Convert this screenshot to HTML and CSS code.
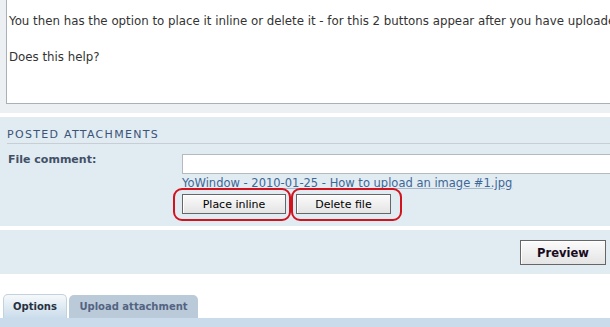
FILE: index.html
```html
<!DOCTYPE html>
<html lang="en">
<head>
  <meta charset="UTF-8">
  <title>Post a reply</title>
  <link rel="stylesheet" href="styles.css">
</head>
<body>
  <div class="panel message-panel">
    <div class="message-box">
      <p>You then has the option to place it inline or delete it - for this 2 buttons appear after you have uploaded</p>
      <p>Does this help?</p>
    </div>
  </div>

  <div class="panel attach-panel">
    <h3>Posted attachments</h3>
    <div class="attach-row">
      <label class="attach-label" for="comment">File comment:</label>
      <div class="attach-fields">
        <input type="text" id="comment" class="inputbox">
        <a href="#" class="attach-link">YoWindow - 2010-01-25 - How to upload an image #1.jpg</a>
        <div class="attach-buttons">
          <span class="ring ring-left"><button class="button2 btn-inline">Place inline</button></span>
          <span class="ring ring-right"><button class="button2 btn-delete">Delete file</button></span>
        </div>
      </div>
    </div>
  </div>

  <div class="panel submit-panel">
    <button class="button2 btn-preview">Preview</button>
  </div>

  <ul class="tabs">
    <li class="tab active">Options</li>
    <li class="tab">Upload attachment</li>
  </ul>
  <div class="tab-bar"></div>
</body>
</html>
```

FILE: styles.css
```css
html, body { margin: 0; padding: 0; background: #fff; overflow: hidden; }
body { font-family: "DejaVu Sans", Verdana, sans-serif; font-size: 11px; color: #333; width: 610px; }

.panel { overflow: hidden; }

.message-panel { background-color: #ecf0f3; height: 113px; padding-left: 6px; box-sizing: border-box; }
.message-box { background: #fff; border-left: 1px solid #a9b1b8; border-bottom: 1px solid #a9b1b8; height: 104px; box-sizing: border-box; padding: 12px 0 0 2px; white-space: nowrap; overflow: hidden; }
.message-box p { margin: 0 0 18px 0; line-height: 18px; font-size: 11.8px; color: #333; }

.attach-panel { background-color: #e1ebf2; margin-top: 4px; height: 109px; box-sizing: border-box; padding: 11px 0 0 7px; }
.attach-panel h3 { margin: 0; font-size: 11px; font-weight: normal; line-height: 14px; padding-bottom: 1px; text-transform: uppercase; color: #3c5378; border-bottom: 1px solid #c8ced4; letter-spacing: 1.3px; }
.attach-row { display: flex; margin-top: 10px; }
.attach-label { width: 175px; flex-shrink: 0; font-weight: bold; color: #425067; line-height: 14px; margin-top: -1px; padding-left: 1px; box-sizing: border-box; }
.attach-fields { flex-grow: 1; min-width: 0; }
.inputbox { display: block; width: 460px; height: 20px; box-sizing: border-box; border: 1px solid #b4bac0; background: #fff; margin: 0; padding: 2px; }
.attach-link { display: block; margin-top: 2px; line-height: 14px; font-size: 11.5px; color: #3d6796; text-decoration: underline; text-decoration-color: #a8b8c8; white-space: nowrap; }
.attach-buttons { display: flex; gap: 10px; margin-top: 4px; }

.button2 { font-family: "DejaVu Sans", Verdana, sans-serif; font-size: 11px; color: #000; height: 20px; padding: 0; border: 1px solid #666; background: linear-gradient(#fbfbfb, #e4e4e4); box-shadow: inset 1px 1px 0 #fff; cursor: pointer; }
.btn-inline { width: 104px; }
.btn-delete { width: 95px; }

.ring { position: relative; display: inline-block; }
.ring::before { content: ""; position: absolute; border: 2px solid #d2121c; border-radius: 9px; pointer-events: none; }
.ring-left::before { left: -9px; right: -5px; top: -6px; bottom: -7px; }
.ring-right::before { left: -5px; right: -11px; top: -6px; bottom: -7px; }

.submit-panel { background-color: #e1ebf2; margin-top: 4px; height: 44px; box-sizing: border-box; padding: 10px 4px 0 0; display: flex; justify-content: flex-end; align-items: flex-start; }
.btn-preview { width: 86px; height: 25px; font-weight: bold; font-size: 11.5px; color: #1a0a1e; }

.tabs { list-style: none; margin: 20px 0 0 0; padding: 0 0 0 3px; display: flex; align-items: flex-end; gap: 2px; height: 24px; }
.tab { font-weight: bold; font-size: 10px; box-sizing: border-box; border-radius: 5px 5px 0 0; display: flex; align-items: center; justify-content: center; }
.tab.active { width: 64px; height: 24px; color: #28313f; background: linear-gradient(#f6f9fb, #cadceb); border: 1px solid #c4d2de; border-bottom: none; }
.tab:not(.active) { width: 129px; height: 23px; color: #536482; background: #bbcad9; }
.tab-bar { height: 12px; background: #cadceb; }
```
